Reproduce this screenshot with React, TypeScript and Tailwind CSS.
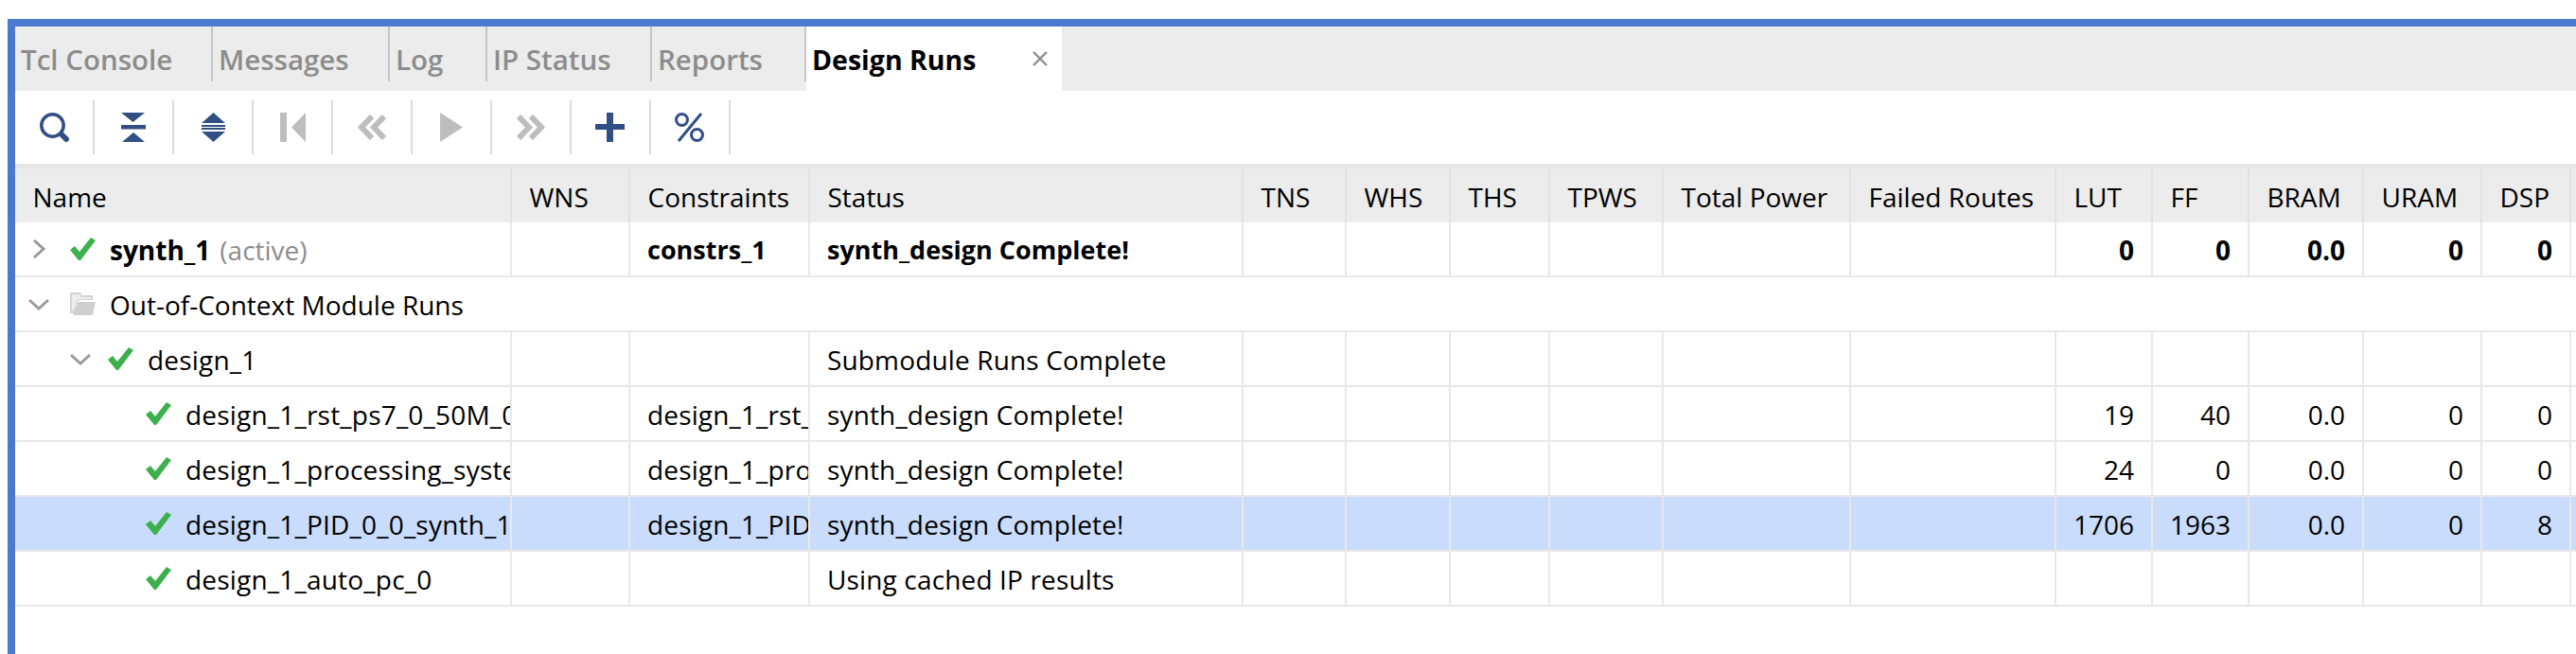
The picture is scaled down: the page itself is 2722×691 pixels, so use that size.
const GRID =
  "grid grid-cols-[525px_125px_190px_458px_109px_110px_105px_120px_198px_217px_102px_102px_121px_125px_94px_1fr]";

const HEADERS = [
  "Name",
  "WNS",
  "Constraints",
  "Status",
  "TNS",
  "WHS",
  "THS",
  "TPWS",
  "Total Power",
  "Failed Routes",
  "LUT",
  "FF",
  "BRAM",
  "URAM",
  "DSP",
];

const TABS = [
  { label: "Tcl Console", className: "w-[209px]" },
  { label: "Messages", className: "w-[187px]" },
  { label: "Log", className: "w-[103px]" },
  { label: "IP Status", className: "w-[174px]" },
  { label: "Reports", className: "w-[163px]" },
];

function Check() {
  return (
    <svg width="27" height="24" viewBox="0 0 27 24" className="shrink-0">
      <path d="M0 13 L5 9 L10 15 L22 0 L27 3 L11 24 L9 24 Z" fill="#3bb04c" />
    </svg>
  );
}

function ChevronRight() {
  return (
    <svg width="14" height="20" viewBox="0 0 14 20" fill="none" stroke="#9a9a9a" strokeWidth="3">
      <path d="M2 1 L12 10 L2 19" />
    </svg>
  );
}

function ChevronDown() {
  return (
    <svg width="22" height="13" viewBox="0 0 22 13" fill="none" stroke="#9a9a9a" strokeWidth="3">
      <path d="M1 2 L11 11 L21 2" />
    </svg>
  );
}

function Folder() {
  return (
    <svg width="27" height="24" viewBox="0 0 27 24" className="shrink-0">
      <path d="M0 0 H11 L13 3 H24 V8 H9 L5 22 H0 Z" fill="#d4d4d4" />
      <path d="M2 2 H10 L12 5 H22 V7 H8 L4 19 H2 Z" fill="#eeeeee" />
      <path d="M9 10 H27 L24 24 H3 Z" fill="#cfcfcf" />
    </svg>
  );
}

const BLUE = "#324f85";
const GREY = "#bdbdbd";

const TOOL_ICONS = [
  <svg width="31" height="31" viewBox="0 0 31 31" fill="none" key="search">
    <circle cx="13.5" cy="13.5" r="11.7" stroke={BLUE} strokeWidth="3.5" />
    <path d="M24 24 L28 28" stroke={BLUE} strokeWidth="6" strokeLinecap="round" />
  </svg>,
  <svg width="26" height="31" viewBox="0 0 26 31" key="collapse">
    <path d="M0 0 H25 L12.5 10 Z M0 13 H26 V17.5 H0 Z M13 21 L25 31 H1 Z" fill={BLUE} />
  </svg>,
  <svg width="25" height="31" viewBox="0 0 25 31" key="expand">
    <path d="M12.5 0 L25 11 H0 Z M0 13 H25 V15 H0 Z M0 16 H25 V18 H0 Z M0 20 H25 L12.5 31 Z" fill={BLUE} />
  </svg>,
  <svg width="27" height="31" viewBox="0 0 27 31" key="first">
    <path d="M0 0 H7 V31 H0 Z M27 0 V31 L12 15.5 Z" fill={GREY} />
  </svg>,
  <svg width="31" height="27" viewBox="0 0 31 27" fill="none" stroke={GREY} strokeWidth="6" className="-ml-[2px]" key="prev">
    <path d="M16 2 L5 13.5 L16 25 M29 2 L18 13.5 L29 25" />
  </svg>,
  <svg width="24" height="31" viewBox="0 0 24 31" key="play">
    <path d="M0 0 L24 15.5 L0 31 Z" fill={GREY} />
  </svg>,
  <svg width="31" height="27" viewBox="0 0 31 27" fill="none" stroke={GREY} strokeWidth="6" key="next">
    <path d="M2 2 L13 13.5 L2 25 M15 2 L26 13.5 L15 25" />
  </svg>,
  <svg width="31" height="31" viewBox="0 0 31 31" className="-ml-[2px]" key="add">
    <path d="M12 0 H19 V12 H31 V18 H19 V31 H12 V18 H0 V12 H12 Z" fill={BLUE} />
  </svg>,
  <svg width="31" height="31" viewBox="0 0 31 31" fill="none" stroke={BLUE} strokeWidth="3" className="-ml-[2px]" key="percent">
    <circle cx="7.5" cy="7.5" r="6" />
    <circle cx="23.5" cy="23.5" r="6" />
    <path d="M28 1 L4 30" />
  </svg>,
];

const RESOURCE_EMPTY = ["", "", "", "", ""];

const ROWS = [
  {
    indent: "pl-[18px]",
    toggle: <ChevronRight />,
    toggleBox: "w-[40px]",
    name: "synth_1",
    suffix: "(active)",
    constraints: "constrs_1",
    status: "synth_design Complete!",
    values: ["0", "0", "0.0", "0", "0"],
    bold: true,
    selected: false,
  },
  {
    indent: "pl-[58px]",
    toggle: <ChevronDown />,
    toggleBox: "w-[40px]",
    name: "design_1",
    constraints: "",
    status: "Submodule Runs Complete",
    values: RESOURCE_EMPTY,
  },
  {
    indent: "pl-[138px]",
    name: "design_1_rst_ps7_0_50M_0",
    constraints: "design_1_rst_ps7_0_50M_0",
    status: "synth_design Complete!",
    values: ["19", "40", "0.0", "0", "0"],
  },
  {
    indent: "pl-[138px]",
    name: "design_1_processing_system7_0_0",
    constraints: "design_1_processing_system7_0_0",
    status: "synth_design Complete!",
    values: ["24", "0", "0.0", "0", "0"],
  },
  {
    indent: "pl-[138px]",
    name: "design_1_PID_0_0_synth_1",
    constraints: "design_1_PID_0_0",
    status: "synth_design Complete!",
    values: ["1706", "1963", "0.0", "0", "8"],
    selected: true,
  },
  {
    indent: "pl-[138px]",
    name: "design_1_auto_pc_0",
    constraints: "",
    status: "Using cached IP results",
    values: RESOURCE_EMPTY,
  },
];

type RowData = (typeof ROWS)[number];

function Cell({
  children,
  right,
  className = "pl-[19px]",
}: {
  children?: React.ReactNode;
  right?: boolean;
  className?: string;
}) {
  return (
    <div
      className={`flex items-center overflow-hidden whitespace-nowrap border-r-2 border-[#e8e8e8] pt-[1px] ${
        right ? "justify-end pr-[18px]" : className
      }`}
    >
      {children}
    </div>
  );
}

function RunRow({ row }: { row: RowData }) {
  const weight = row.bold ? "font-bold" : "";
  const textCell = row.bold ? "pl-[18px] text-[27px]" : "pl-[18px] tracking-[0.15px]";
  return (
    <div
      className={`${GRID} h-[58px] border-b-2 border-[#e8e8e8] ${weight} ${
        row.selected ? "bg-[#c9dcfc]" : ""
      }`}
    >
      <div className={`flex items-center overflow-hidden whitespace-nowrap border-r-2 border-[#e8e8e8] ${row.indent}`}>
        {row.toggle && <span className={`flex shrink-0 ${row.toggleBox}`}>{row.toggle}</span>}
        <Check />
        <span className={`ml-[15px] pt-[1px] ${row.bold ? "" : "tracking-[0.2px]"}`}>{row.name}</span>
        {row.suffix && <span className="ml-[10px] pt-[1px] font-normal text-[#8c8c8c]">{row.suffix}</span>}
      </div>
      <Cell />
      <Cell className={textCell}>{row.constraints}</Cell>
      <Cell className={textCell}>{row.status}</Cell>
      <Cell />
      <Cell />
      <Cell />
      <Cell />
      <Cell />
      <Cell />
      {row.values.map((value, i) => (
        <Cell key={i} right>
          {value}
        </Cell>
      ))}
    </div>
  );
}

export default function App() {
  return (
    <div className="h-[691px] w-[2722px] overflow-hidden bg-white pt-[20px] pl-[8px] font-['Open_Sans','Liberation_Sans',sans-serif] text-[28px] leading-[40px] text-black">
      <div className="h-[671px] border-t-[8px] border-l-[8px] border-[#4a7acd]">
        {/* Tabs */}
        <div className="flex h-[68px] bg-[#ececec]">
          {TABS.map((tab) => (
            <div key={tab.label} className={`${tab.className} h-[58px] border-r-2 border-[#c6c6c6] pl-[6px] pt-[15px] text-[29.5px] font-semibold text-[#8c8c8c]`}>
              {tab.label}
            </div>
          ))}
          <div className="flex h-[68px] w-[270px] items-start justify-between bg-white pt-[15px] pr-[15px] pl-[6px] text-[28.5px] font-bold">
            <span>Design Runs</span>
            <svg width="16" height="16" viewBox="0 0 16 16" stroke="#8c8c8c" strokeWidth="2.4" className="mt-[11px]">
              <path d="M1 1 L15 15 M15 1 L1 15" />
            </svg>
          </div>
        </div>

        {/* Toolbar */}
        <div className="flex h-[77px] items-center">
          {TOOL_ICONS.map((icon, i) => (
            <div key={i} className="flex h-[57px] w-[84px] items-center justify-center border-r-2 border-[#dcdcdc]">
              {icon}
            </div>
          ))}
        </div>

        {/* Table */}
        <div className="border-t-[5px] border-[#e6e6e6]">
          <div className={`${GRID} h-[57px] bg-[#ececec]`}>
            {HEADERS.map((header) => (
              <div key={header} className="flex items-center whitespace-nowrap border-r-2 border-[#e2e2e2] pl-[18.5px] pt-[2px]">
                {header}
              </div>
            ))}
          </div>
          <RunRow row={ROWS[0]} />
          <div className="flex h-[58px] items-center border-b-2 border-[#e8e8e8] pl-[14px]">
            <span className="flex w-[44px] shrink-0">
              <ChevronDown />
            </span>
            <Folder />
            <span className="ml-[15px] pt-[1px]">Out-of-Context Module Runs</span>
          </div>
          {ROWS.slice(1).map((row) => (
            <RunRow key={row.name} row={row} />
          ))}
        </div>
      </div>
    </div>
  );
}
